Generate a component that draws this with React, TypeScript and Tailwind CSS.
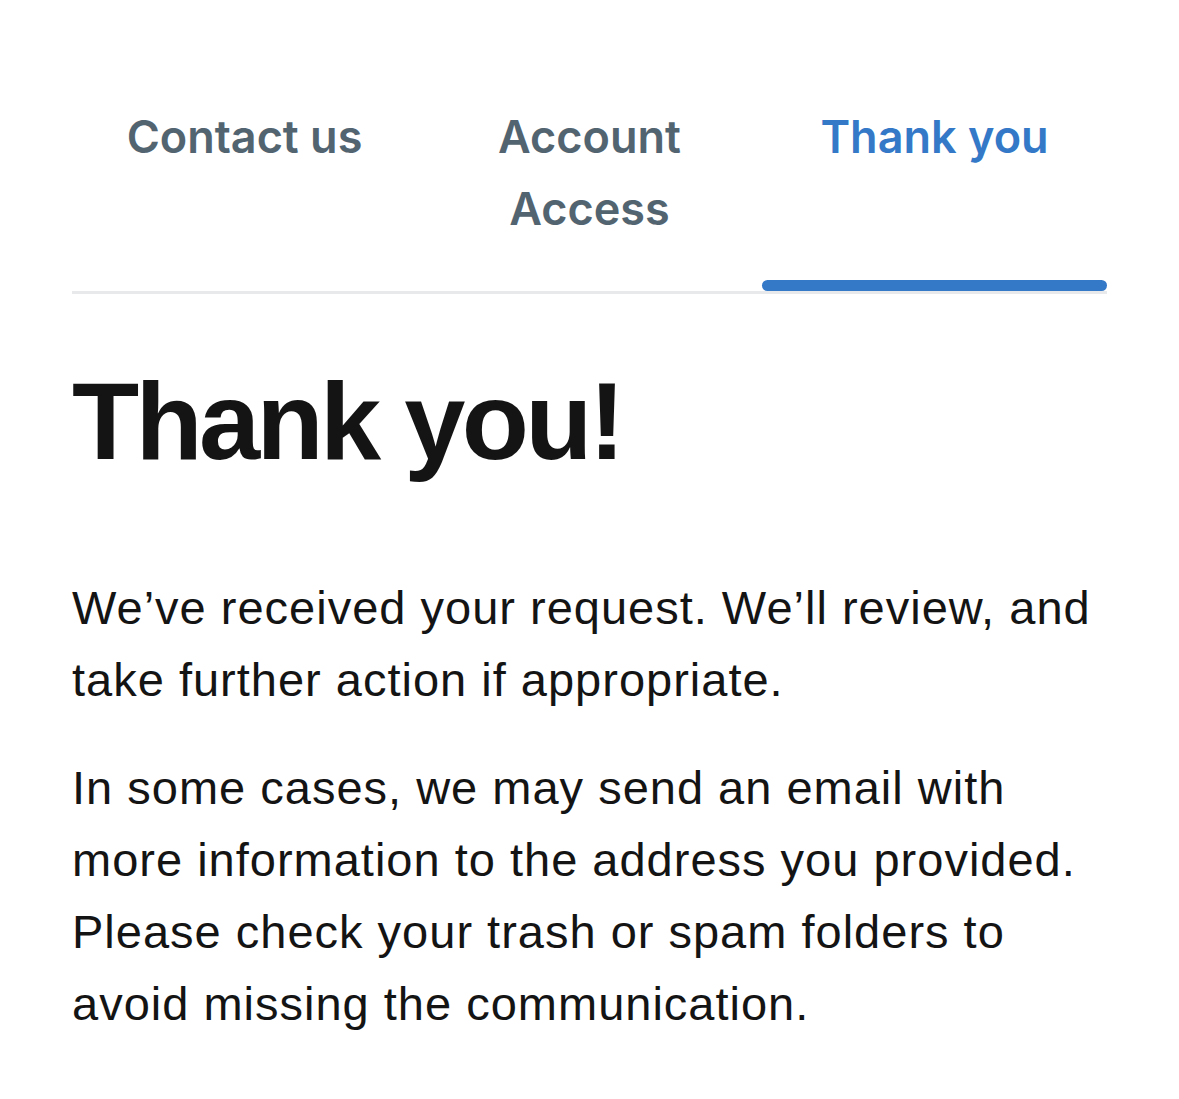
export default function App() {
  const tabs = [
    { label: "Contact us", active: false },
    { label: "Account Access", active: false },
    { label: "Thank you", active: true },
  ];
  return (
    <div className="min-h-[1099px] w-[1179px] bg-white">
      <div className="px-[72px] pt-[101px]">
        <div className="grid grid-cols-3 border-b-[3px] border-[#e7e9eb]">
          {tabs.map((t) => (
            <div key={t.label} className="flex flex-col items-center">
              <div
                className={`px-[40px] text-center text-[45px] font-semibold leading-[72px] ${
                  t.active ? "text-[#3478c8]" : "text-[#536471]"
                }`}
                style={{ fontFamily: "Inter, 'Noto Sans', sans-serif" }}
              >
                {t.label === "Account Access" ? (
                  <>
                    Account
                    <br />
                    Access
                  </>
                ) : (
                  t.label
                )}
              </div>
              <div className="mt-auto w-full pt-[35px]">
                <div className={`h-[11px] w-full rounded-full ${t.active ? "bg-[#3478c8]" : "bg-transparent"}`} />
              </div>
            </div>
          ))}
        </div>
        <div style={{ fontFamily: "'Liberation Sans', Arial, sans-serif" }} className="text-[#141414]">
          <h1 className="mt-[72px] text-[110px] font-bold leading-[110px] tracking-[-3.7px]">Thank you!</h1>
          <p className="mt-[96px] text-[47px] leading-[72px] tracking-[1px]">
            We’ve received your request. We’ll review, and take further action if appropriate.
          </p>
          <p className="mt-[36px] text-[47px] leading-[72px] tracking-[1px]">
            In some cases, we may send an email with more information to the address you provided. Please check your trash or spam folders to avoid missing the communication.
          </p>
        </div>
      </div>
    </div>
  );
}
